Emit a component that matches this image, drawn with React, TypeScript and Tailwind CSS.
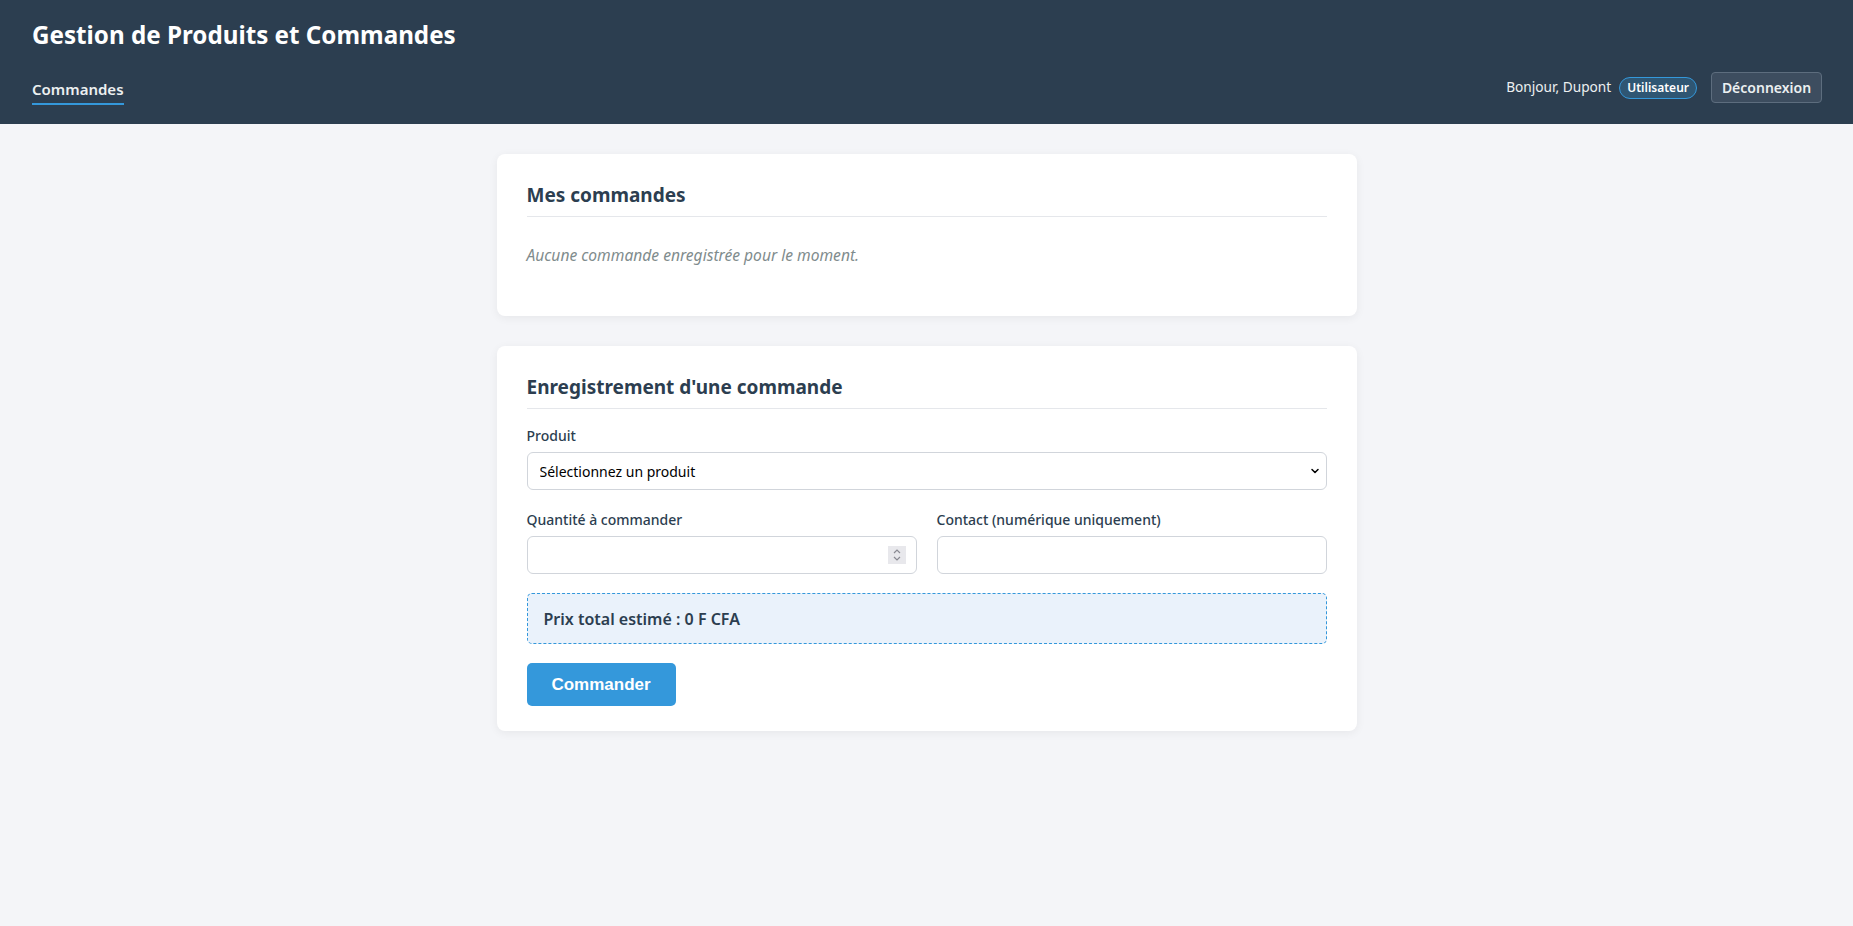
import { ChevronDown } from 'lucide-react'

function Header() {
  return (
    <header className="bg-[#2c3e50] pl-[32px] pr-[31px] pt-[20px] pb-[19px] text-white">
      <h1 className="text-[24.2px] font-bold leading-[29px]">Gestion de Produits et Commandes</h1>
      <div className="mt-[23px] flex items-end justify-between">
        <nav className="flex">
          <a className="border-b-2 border-[#3498db] pb-[4px] text-[15px] font-semibold leading-[20px] text-[#ecf0f1]">
            Commandes
          </a>
        </nav>
        <div className="mb-[2px] flex items-center">
          <span className="text-[13.7px] text-[#ecf0f1]">Bonjour, Dupont</span>
          <span className="ml-[8px] flex h-[22px] items-center rounded-full border border-[#3498db] bg-[#2f5673] px-[7px] text-[12px] font-semibold text-white">
            Utilisateur
          </span>
          <button className="ml-[14px] h-[31px] w-[111px] rounded-[4px] border border-[#5d6d7e] bg-[#3d4d5f] text-[14px] font-semibold text-[#ecf0f1]">
            Déconnexion
          </button>
        </div>
      </div>
    </header>
  )
}

function CardTitle({ children }: { children: string }) {
  return (
    <h2 className="border-b border-[#e5e7eb] pb-[9px] text-[19px] font-bold leading-[23px] text-[#2c3e50]">
      {children}
    </h2>
  )
}

function Field({ label, children }: { label: string; children: React.ReactNode }) {
  return (
    <div className="flex flex-col">
      <label className="mb-[6px] text-[14px] font-medium leading-[20px] text-[#2c3e50]">{label}</label>
      {children}
    </div>
  )
}

export default function App() {
  return (
    <div className="min-h-[926px] bg-[#f4f5f8] font-['Noto_Sans',sans-serif]">
      <Header />
      <main className="mx-auto flex w-[860px] flex-col gap-[30px] pt-[30px]">
        <section className="rounded-[8px] bg-white px-[30px] pt-[30px] pb-[50px] shadow-[0_2px_10px_rgba(0,0,0,0.06)]">
          <CardTitle>Mes commandes</CardTitle>
          <p className="mt-[27px] text-[15.6px] italic leading-[22px] text-[#7f8c8d]">
            Aucune commande enregistrée pour le moment.
          </p>
        </section>

        <section className="rounded-[8px] bg-white px-[30px] pt-[30px] pb-[25px] shadow-[0_2px_10px_rgba(0,0,0,0.06)]">
          <CardTitle>Enregistrement d'une commande</CardTitle>
          <div className="mt-[17px]">
            <Field label="Produit">
              <div className="relative">
                <select className="h-[38px] w-full appearance-none rounded-[6px] border border-[#d1d5db] bg-white pl-[12px] text-[14px] text-black outline-none">
                  <option>Sélectionnez un produit</option>
                </select>
                <ChevronDown className="pointer-events-none absolute right-[6px] top-[13px] h-[12px] w-[12px] text-black" strokeWidth={3} />
              </div>
            </Field>
          </div>
          <div className="mt-[20px] grid grid-cols-2 gap-[20px]">
            <Field label="Quantité à commander">
              <div className="flex h-[38px] items-center rounded-[6px] border border-[#d1d5db] bg-white pr-[10px]">
                <input type="text" className="h-full flex-1 bg-transparent px-[12px] outline-none" />
                <div className="flex h-[18px] w-[18px] items-center justify-center bg-[#e8e8ec]">
                  <svg width="10" height="14" viewBox="0 0 10 14" fill="none" stroke="#8a8a92" strokeWidth="1.2">
                    <path d="M2 5 L5 2 L8 5" />
                    <path d="M2 9 L5 12 L8 9" />
                  </svg>
                </div>
              </div>
            </Field>
            <Field label="Contact (numérique uniquement)">
              <input type="text" className="h-[38px] rounded-[6px] border border-[#d1d5db] bg-white px-[12px] outline-none" />
            </Field>
          </div>
          <div className="mt-[19px] flex h-[51px] items-center rounded-[5px] border border-dashed border-[#3498db] bg-[#eaf2fb] px-[16px]">
            <span className="text-[16px] font-semibold text-[#2c3e50]">Prix total estimé : 0 F CFA</span>
          </div>
          <button className="mt-[19px] h-[43px] w-[149px] rounded-[5px] bg-[#3498db] font-['Liberation_Sans',sans-serif] text-[17px] font-bold text-white">
            Commander
          </button>
        </section>
      </main>
    </div>
  )
}
